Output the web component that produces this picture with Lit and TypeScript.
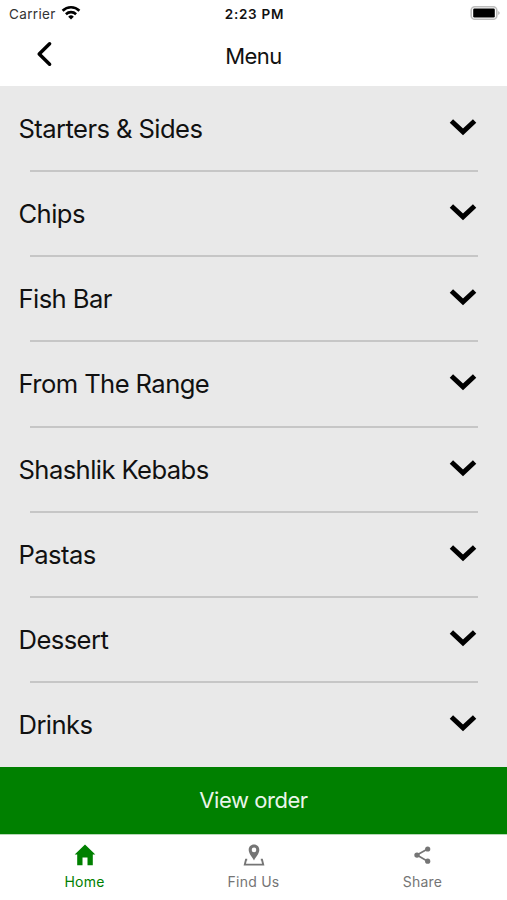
import { LitElement, html, css, svg } from "lit";
import { customElement, property } from "lit/decorators.js";

@customElement("menu-row")
class MenuRow extends LitElement {
  @property() label = "";
  @property({ type: Boolean }) last = false;

  static styles = css`
    :host { display: flex; flex-direction: column; flex: none; height: 85.125px; }
    .line { flex: 1; display: flex; align-items: center; justify-content: space-between; padding: 1px 30px 0 18.5px; }
    .label { font-size: 25.6px; line-height: 32px; letter-spacing: -0.58px; color: #111; white-space: nowrap; }
    .chevron { width: 28px; height: 18px; margin-bottom: 4px; }
    .rule { height: 2px; margin: 0 29px 0 30px; background: #c6c6c6; }
    .rule.none { background: transparent; }
  `;

  render() {
    return html`
      <div class="line">
        <span class="label">${this.label}</span>
        <svg class="chevron" viewBox="0 0 28 18" fill="none" stroke="#000" stroke-width="4.9">
          <path d="M2.4 3 L14 13.8 L25.6 3" />
        </svg>
      </div>
      <div class="rule ${this.last ? "none" : ""}"></div>
    `;
  }
}

const home = svg`<path fill="currentColor" d="M11 0.6 L21.3 10.6 H18.8 V21.3 H13.5 V13.4 H8.5 V21.3 H3.2 V10.6 H0.7 Z" />`;
const pin = svg`
  <path fill="currentColor" fill-rule="evenodd" d="M11 0.6 C7.8 0.6 5.7 3 5.7 5.9 C5.7 9.5 9.1 12.5 11 16.4 C12.9 12.5 16.3 9.5 16.3 5.9 C16.3 3 14.2 0.6 11 0.6 Z M11 3.6 A2.3 2.3 0 1 1 11 8.2 A2.3 2.3 0 1 1 11 3.6 Z" />
  <path fill="none" stroke="currentColor" stroke-width="1.9" d="M4.2 15.6 H3 L1.8 20.6 H20.2 L19 15.6 H17.8" />`;
const share = svg`
  <path fill="none" stroke="currentColor" stroke-width="1.7" d="M15.6 5 L4.9 11 L15.6 17.2" />
  <circle cx="15.7" cy="5" r="2.6" fill="currentColor" />
  <circle cx="5" cy="11.1" r="2.7" fill="currentColor" />
  <circle cx="15.7" cy="17.2" r="2.6" fill="currentColor" />`;

@customElement("app-root")
class AppRoot extends LitElement {
  static styles = css`
    :host { display: flex; flex-direction: column; height: 900px; background: #fff; color: #111; font-family: Inter, "Liberation Sans", sans-serif; overflow: hidden; }
    .status { display: grid; grid-template-columns: 1fr auto 1fr; align-items: center; height: 27px; padding: 0 7px 0 9px; font-size: 13.5px; line-height: 16px; }
    .carrier { display: flex; align-items: center; gap: 5.5px; letter-spacing: 0.35px; color: #333; }
    .wifi { width: 20px; height: 15px; margin-top: -2px; }
    .time { font-weight: 600; letter-spacing: 0.75px; }
    .battery { width: 30px; height: 16px; justify-self: end; margin-top: -1px; }
    .header { display: grid; grid-template-columns: 1fr auto 1fr; align-items: center; height: 59px; }
    .back { width: 18px; height: 28px; margin: -6px 0 0 36px; }
    .title { font-size: 22px; line-height: 28px; letter-spacing: -0.55px; margin-top: -2px; }
    .list { height: 681px; display: flex; flex-direction: column; background: #e9e9e9; box-sizing: border-box; padding-top: 1px; overflow: hidden; }
    .order { height: 67px; display: flex; align-items: center; justify-content: center; background: #008000; color: #e9f5e9; font-size: 22px; letter-spacing: -0.45px; padding-bottom: 1px; box-sizing: border-box; }
    .tabs { flex: 1; display: grid; grid-template-columns: repeat(3, 1fr); border-top: 1px solid #b5d8b5; box-sizing: border-box; }
    .tab { display: flex; flex-direction: column; align-items: center; padding-top: 9px; gap: 7px; color: #757575; font-size: 14px; line-height: 18px; letter-spacing: 0.25px; }
    .tab.active { color: #008000; }
    .tab svg { width: 22px; height: 22px; }
  `;

  render() {
    const items = ["Starters & Sides", "Chips", "Fish Bar", "From The Range", "Shashlik Kebabs", "Pastas", "Dessert", "Drinks"];
    const tabs = [
      { label: "Home", icon: home },
      { label: "Find Us", icon: pin },
      { label: "Share", icon: share },
    ];
    return html`
      <div class="status">
        <div class="carrier">
          <span>Carrier</span>
          <svg class="wifi" viewBox="0 0 20 15" fill="none" stroke="#000" stroke-width="2.6">
            <path d="M1.6 5.7 A12 12 0 0 1 18.4 5.7" />
            <path d="M4.9 9.2 A7.4 7.4 0 0 1 15.1 9.2" />
            <path d="M10 14.5 L7.2 11.7 A4 4 0 0 1 12.8 11.7 Z" fill="#000" stroke="none" />
          </svg>
        </div>
        <span class="time">2:23 PM</span>
        <svg class="battery" viewBox="0 0 30 16">
          <rect x="1.2" y="1.7" width="25.6" height="12.6" rx="3.6" fill="#fff" stroke="#bdbdbd" stroke-width="1.6" />
          <rect x="3.2" y="3.6" width="21.6" height="8.8" rx="1.2" fill="#000" />
          <path d="M28.3 6 Q31 8 28.3 10 Z" fill="#aaa" />
        </svg>
      </div>
      <div class="header">
        <svg class="back" viewBox="0 0 18 28" fill="none" stroke="#000" stroke-width="3.5" stroke-linecap="round" stroke-linejoin="round">
          <path d="M13.6 3.8 L3.2 14 L13.6 24.2" />
        </svg>
        <span class="title">Menu</span>
      </div>
      <div class="list">
        ${items.map((label, i) => html`<menu-row .label=${label} .last=${i === items.length - 1}></menu-row>`)}
      </div>
      <div class="order">View order</div>
      <div class="tabs">
        ${tabs.map((tab, i) => html`
          <div class="tab ${i === 0 ? "active" : ""}">
            <svg viewBox="0 0 22 22">${tab.icon}</svg>
            <span>${tab.label}</span>
          </div>`)}
      </div>
    `;
  }
}
